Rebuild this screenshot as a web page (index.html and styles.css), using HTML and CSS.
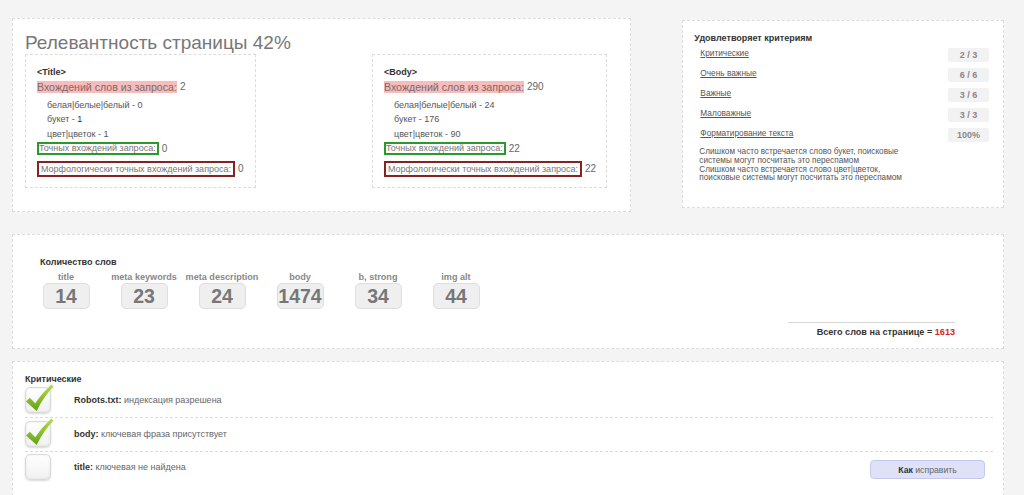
FILE: index.html
```html
<!DOCTYPE html>
<html lang="ru">
<head>
<meta charset="utf-8">
<title>Анализ</title>
<link rel="stylesheet" href="styles.css">
</head>
<body>
<div class="page">
  <div class="top-row">
    <section class="panel relevance">
      <h1 class="rel-title">Релевантность страницы 42%</h1>
      <div class="tags">
        <div class="tag-box">
          <div class="tag-name">&lt;Title&gt;</div>
          <div class="hits"><span class="hl">Вхождений слов из запроса:</span> <span class="val">2</span></div>
          <ul class="words">
            <li>белая|белые|белый - 0</li>
            <li>букет - <b class="num">1</b></li>
            <li>цвет|цветок - 1</li>
          </ul>
          <div class="exact"><span class="box-green">Точных вхождений запроса:</span><span class="val">0</span></div>
          <div class="morph"><span class="box-red">Морфологически точных вхождений запроса:</span><span class="val">0</span></div>
        </div>
        <div class="tag-box tag-body">
          <div class="tag-name">&lt;Body&gt;</div>
          <div class="hits"><span class="hl">Вхождений слов из запроса:</span> <span class="val">290</span></div>
          <ul class="words">
            <li>белая|белые|белый - 24</li>
            <li>букет - 176</li>
            <li>цвет|цветок - 90</li>
          </ul>
          <div class="exact"><span class="box-green">Точных вхождений запроса:</span><span class="val">22</span></div>
          <div class="morph"><span class="box-red">Морфологически точных вхождений запроса:</span><span class="val">22</span></div>
        </div>
      </div>
    </section>

    <section class="panel criteria">
      <div class="crit-title">Удовлетворяет критериям</div>
      <div class="crit-list">
        <div class="crit-row"><a class="crit-link">Критические</a><span class="badge">2 / 3</span></div>
        <div class="crit-row"><a class="crit-link">Очень важные</a><span class="badge">6 / 6</span></div>
        <div class="crit-row"><a class="crit-link">Важные</a><span class="badge">3 / 6</span></div>
        <div class="crit-row"><a class="crit-link">Маловажные</a><span class="badge">3 / 3</span></div>
        <div class="crit-row"><a class="crit-link">Форматирование текста</a><span class="badge">100%</span></div>
      </div>
      <p class="notes">Слишком часто встречается слово букет, поисковые<br>системы могут посчитать это переспамом<br>Слишком часто встречается слово цвет|цветок,<br>поисковые системы могут посчитать это переспамом</p>
    </section>
  </div>

  <section class="panel counts">
    <div class="counts-title">Количество слов</div>
    <div class="count-grid">
      <div class="count"><div class="count-label">title</div><div class="count-box">14</div></div>
      <div class="count"><div class="count-label">meta keywords</div><div class="count-box">23</div></div>
      <div class="count"><div class="count-label">meta description</div><div class="count-box">24</div></div>
      <div class="count"><div class="count-label">body</div><div class="count-box">1474</div></div>
      <div class="count"><div class="count-label">b, strong</div><div class="count-box">34</div></div>
      <div class="count"><div class="count-label">img alt</div><div class="count-box">44</div></div>
    </div>
    <div class="total">Всего слов на странице = <span class="total-num">1613</span></div>
  </section>

  <section class="panel critical">
    <div class="section-title">Критические</div>
    <div class="rows">
      <div class="row row-1">
        <span class="check ok"><svg viewBox="0 0 26 26" width="26" height="26" aria-hidden="true"><defs><linearGradient id="g1" x1="0" y1="0" x2="0" y2="1"><stop offset="0" stop-color="#b5e04a"/><stop offset="1" stop-color="#62a312"/></linearGradient></defs><path d="M1 14.5 L4.8 10.8 L10.2 16.2 Q17 6 26.2 -2.6 L28.6 -0.4 Q18.5 10 11.6 24 Z" fill="url(#g1)"/></svg></span>
        <span class="row-text"><b>Robots.txt:</b> индексация разрешена</span>
      </div>
      <div class="row row-2">
        <span class="check ok"><svg viewBox="0 0 26 26" width="26" height="26" aria-hidden="true"><defs><linearGradient id="g2" x1="0" y1="0" x2="0" y2="1"><stop offset="0" stop-color="#b5e04a"/><stop offset="1" stop-color="#62a312"/></linearGradient></defs><path d="M1 14.5 L4.8 10.8 L10.2 16.2 Q17 6 26.2 -2.6 L28.6 -0.4 Q18.5 10 11.6 24 Z" fill="url(#g2)"/></svg></span>
        <span class="row-text"><b>body:</b> ключевая фраза присутствует</span>
      </div>
      <div class="row row-3">
        <span class="check"></span>
        <span class="row-text"><b>title:</b> ключевая не найдена</span>
        <button class="fix-btn"><b>Как</b> исправить</button>
      </div>
    </div>
  </section>
</div>
</body>
</html>
```

FILE: styles.css
```css
body {
  margin: 0;
  background: #f4f4f4;
  font-family: "Liberation Sans", Arial, sans-serif;
  color: #555;
}

.page {
  padding: 18px 20px 0 12px;
}

.panel {
  background: #fff;
  border: 1px dashed #dcdcdc;
  box-sizing: border-box;
}

.top-row {
  display: flex;
  align-items: flex-start;
  gap: 51px;
}

/* Relevance panel */
.relevance {
  width: 620px;
  height: 194px;
  padding: 13px 12px 0;
}

.rel-title {
  margin: 0;
  font-size: 19px;
  line-height: 22px;
  font-weight: normal;
  color: #777;
}

.tags {
  display: flex;
  gap: 116px;
}

.tag-box {
  width: 231px;
  height: 134px;
  border: 1px dashed #dcdcdc;
  box-sizing: border-box;
  padding: 10px 0 0 11px;
}

.tag-body {
  width: 235px;
}

.tag-name {
  font-size: 9px;
  line-height: 14px;
  font-weight: bold;
  color: #333;
}

.hits {
  height: 15px;
  display: flex;
  align-items: center;
  gap: 3px;
}

.hl {
  display: inline-block;
  background: #f7bcbc;
  font-size: 10.6px;
  line-height: 12px;
  color: #7d6a6a;
}

.val {
  font-size: 10px;
  color: #666;
  white-space: nowrap;
}

.words {
  list-style: none;
  margin: 3.5px 0 0 10px;
  padding: 0;
}

.words li {
  font-size: 9px;
  line-height: 14.5px;
  color: #555;
}

.words .num {
  font-weight: normal;
  color: #333;
}

.exact {
  display: flex;
  align-items: center;
  gap: 3px;
  height: 13px;
  margin-top: 0.5px;
}

.box-green {
  display: inline-block;
  height: 13px;
  box-sizing: border-box;
  border: 2px solid #2b9a2b;
  font-size: 9px;
  line-height: 9px;
  color: #777;
  white-space: nowrap;
  padding: 0 1px 0 0;
}

.morph {
  display: flex;
  align-items: center;
  gap: 3px;
  height: 16px;
  margin-top: 6px;
}

.box-red {
  display: inline-block;
  height: 16px;
  box-sizing: border-box;
  border: 2px solid #862222;
  font-size: 9px;
  line-height: 12px;
  color: #777;
  white-space: nowrap;
  padding: 0 2px;
}

/* Criteria panel */
.criteria {
  width: 322px;
  height: 188px;
  margin-top: 2px;
  padding: 10px 0 0 11px;
}

.crit-title {
  font-size: 9px;
  line-height: 14px;
  font-weight: bold;
  color: #333;
}

.crit-list {
  margin: 0 14px 0 6px;
}

.crit-row {
  display: flex;
  justify-content: space-between;
  align-items: flex-start;
  height: 20px;
  padding-top: 2px;
  box-sizing: border-box;
}

.crit-link {
  font-size: 8.3px;
  line-height: 12px;
  color: #555;
  text-decoration: underline;
}

.badge {
  width: 41px;
  height: 14px;
  line-height: 14px;
  background: #f2f2f2;
  border-radius: 2px;
  text-align: center;
  font-size: 9px;
  font-weight: bold;
  color: #888;
  margin-top: 1px;
}

.notes {
  margin: 3px 0 0 5px;
  font-size: 8.2px;
  line-height: 8.8px;
  color: #555;
}

/* Word counts panel */
.counts {
  width: 992px;
  height: 115px;
  margin-top: 22px;
  padding: 20px 0 0 14px;
}

.counts-title {
  margin-left: 13px;
  font-size: 9px;
  line-height: 14px;
  font-weight: bold;
  color: #333;
}

.count-grid {
  display: flex;
  margin-top: 3px;
}

.count {
  width: 78px;
  display: flex;
  flex-direction: column;
  align-items: center;
}

.count-label {
  font-size: 9.1px;
  line-height: 11px;
  font-weight: bold;
  color: #888;
  white-space: nowrap;
}

.count-box {
  width: 47px;
  height: 26px;
  box-sizing: border-box;
  border: 1px solid #dedede;
  border-radius: 5px;
  background: #efefef;
  text-align: center;
  font-size: 19.5px;
  line-height: 24px;
  font-weight: bold;
  color: #777;
  white-space: nowrap;
}

.total {
  width: 167px;
  margin: 13px 48px 0 auto;
  border-top: 1px solid #d6d6d6;
  padding-top: 3px;
  text-align: right;
  font-size: 9.1px;
  line-height: 12px;
  font-weight: bold;
  color: #333;
}

.total-num {
  color: #e02020;
}

/* Critical panel */
.critical {
  width: 992px;
  margin-top: 12px;
  padding: 10px 10px 30px 12px;
}

.section-title {
  font-size: 9px;
  line-height: 14px;
  font-weight: bold;
  color: #333;
}

.row {
  display: flex;
  align-items: flex-start;
  border-bottom: 1px dashed #dcdcdc;
  box-sizing: border-box;
}

.row-1 { padding: 1px 0 4px; }
.row-2 { padding: 3px 0 4px; }
.row-3 { padding: 2px 0 0; border-bottom: none; }

.check {
  position: relative;
  flex: none;
  width: 26px;
  height: 26px;
  box-sizing: border-box;
  border: 1px solid #dadada;
  border-radius: 5px;
  background: linear-gradient(#ffffff, #f1f1f1);
  box-shadow: 0 1px 2px rgba(0, 0, 0, 0.15), inset 0 0 3px rgba(0, 0, 0, 0.08);
}

.check svg {
  position: absolute;
  left: -1px;
  top: -1px;
  overflow: visible;
}

.row-text {
  margin-left: 23px;
  font-size: 9px;
  line-height: 26px;
  color: #666;
}

.row-text b {
  color: #333;
}

.fix-btn {
  margin: 6px 8px 0 auto;
  width: 115px;
  height: 19px;
  box-sizing: border-box;
  border: 1px solid #c6c9ec;
  border-radius: 4px;
  background: #dfe1f8;
  font-family: "Liberation Sans", Arial, sans-serif;
  font-size: 8.7px;
  color: #666;
  padding: 0;
}

.fix-btn b {
  color: #333;
}
```
